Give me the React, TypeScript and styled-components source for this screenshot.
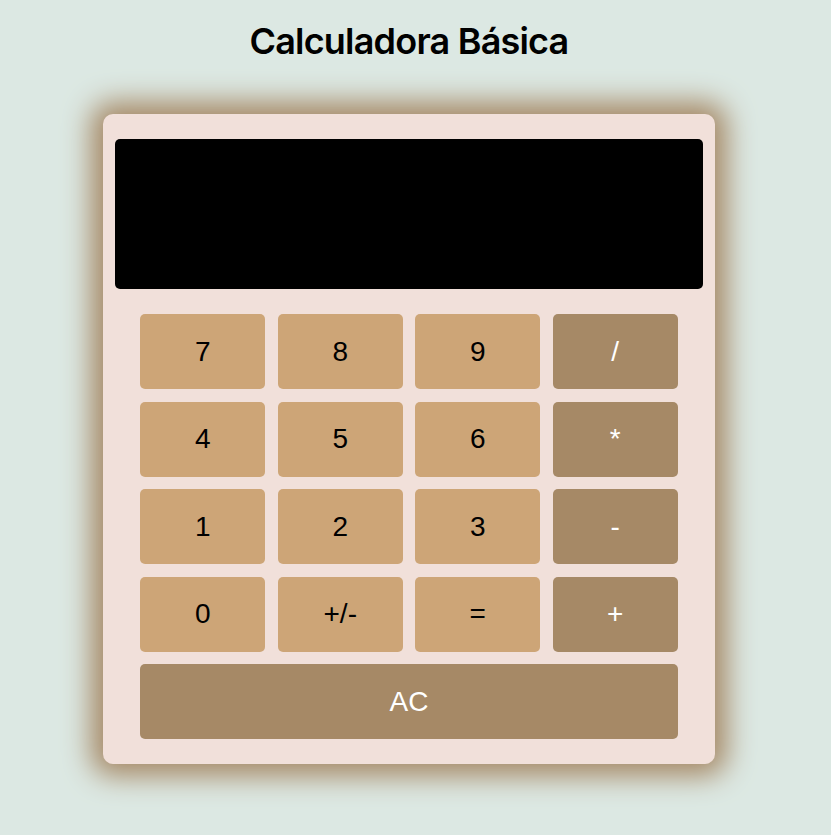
import React from "react";
import styled, { createGlobalStyle } from "styled-components";

const Global = createGlobalStyle`
  html, body {
    margin: 0;
    padding: 0;
    background: #dce8e3;
  }
  body {
    font-family: "Liberation Sans", Arial, sans-serif;
  }
`;

const Page = styled.div`
  display: flex;
  flex-direction: column;
  align-items: center;
  padding-top: 20px;
  padding-right: 13px;
  padding-bottom: 70px;
`;

const Title = styled.h1`
  margin: 0 0 52px 0;
  font-family: Inter, "Noto Sans", sans-serif;
  font-weight: 600;
  font-size: 36px;
  letter-spacing: -0.8px;
  line-height: 42px;
  color: #000;
`;

const Card = styled.div`
  width: 612px;
  box-sizing: border-box;
  padding: 25px 12px 25px 12px;
  background: #f1e0da;
  border-radius: 10px;
  box-shadow: 0 0 28px 12px #a68966;
  display: flex;
  flex-direction: column;
  align-items: center;
`;

const Display = styled.div`
  width: 100%;
  height: 150px;
  background: #000;
  border-radius: 5px;
  margin-bottom: 25px;
`;

const Keys = styled.div`
  display: grid;
  grid-template-columns: repeat(4, 125px);
  column-gap: 12.5px;
  row-gap: 12.5px;
`;

const Key = styled.button<{ $op?: boolean; $wide?: boolean }>`
  height: 75px;
  border: none;
  border-radius: 5px;
  padding: 0;
  font-family: "Liberation Sans", Arial, sans-serif;
  font-size: 28px;
  background: ${(p) => (p.$op ? "#a68966" : "#cda577")};
  color: ${(p) => (p.$op ? "#fff" : "#000")};
  grid-column: ${(p) => (p.$wide ? "1 / -1" : "auto")};
  cursor: pointer;
`;

const keys: { label: string; op?: boolean; wide?: boolean }[] = [
  { label: "7" }, { label: "8" }, { label: "9" }, { label: "/", op: true },
  { label: "4" }, { label: "5" }, { label: "6" }, { label: "*", op: true },
  { label: "1" }, { label: "2" }, { label: "3" }, { label: "-", op: true },
  { label: "0" }, { label: "+/-" }, { label: "=" }, { label: "+", op: true },
  { label: "AC", op: true, wide: true },
];

export default function App() {
  return (
    <>
      <Global />
      <Page>
        <Title>Calculadora Básica</Title>
        <Card>
          <Display />
          <Keys>
            {keys.map((k) => (
              <Key key={k.label} $op={k.op} $wide={k.wide}>
                {k.label}
              </Key>
            ))}
          </Keys>
        </Card>
      </Page>
    </>
  );
}
